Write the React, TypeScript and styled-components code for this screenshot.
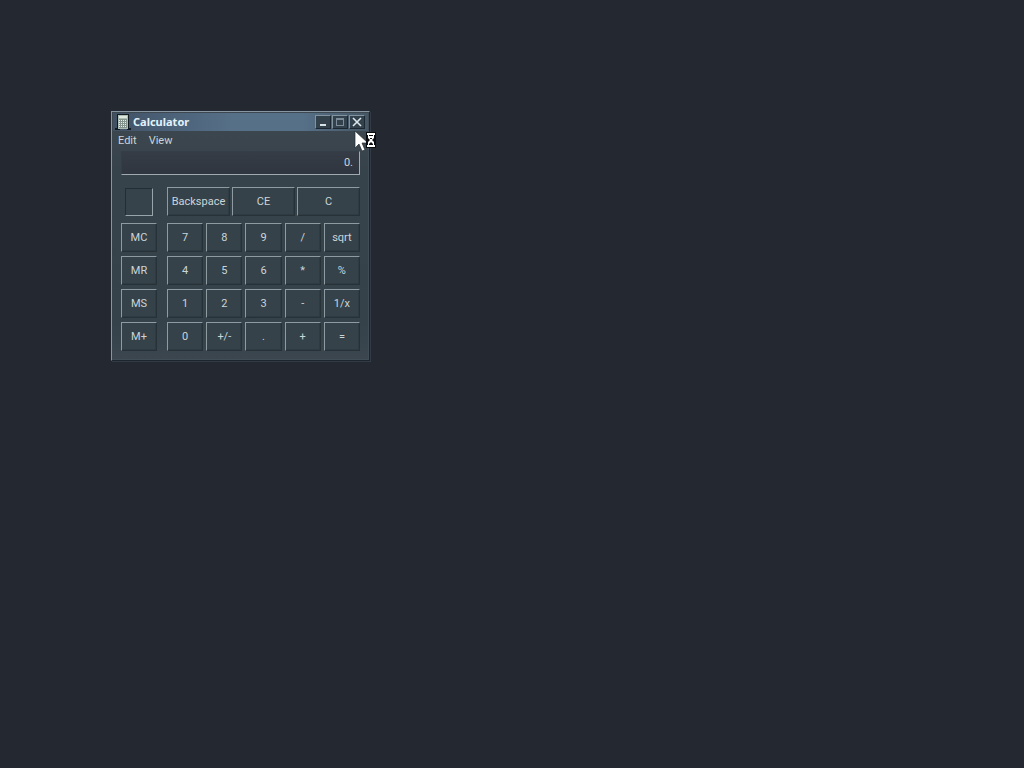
import React, { useState } from "react";
import styled, { createGlobalStyle } from "styled-components";

const GlobalStyle = createGlobalStyle`
  * { box-sizing: border-box; }
  body {
    margin: 0;
    background: #232831;
    color: #cbd5d9;
    font: 11px/14px Roboto, "Liberation Sans", sans-serif;
  }
  button, input { font: inherit; color: inherit; border-radius: 0; margin: 0; }
`;

const Desktop = styled.main`
  position: relative;
  min-height: 100vh;
  overflow: hidden;
  background: #232831;
`;

const Window = styled.section`
  position: absolute;
  left: 111px;
  top: 111px;
  width: 259px;
  padding: 1px;
  border: 1px solid #1d242c;
  border-top-color: #8696a3;
  border-left-color: #8696a3;
  background: linear-gradient(#3d474f 0, #37434b 60px, #35424a 210px, #3b464f 100%);
  box-shadow: inset -1px -1px #414d57, 1px 1px #333c46;
`;

const TitleBar = styled.header`
  display: flex;
  align-items: center;
  gap: 2px;
  height: 18px;
  padding: 0 3px 0 2px;
  background: linear-gradient(90deg, #415062 0, #4a6077 50px, #567088 120px, #567088 190px, #465765 100%);
`;

const Title = styled.h1`
  flex: 1;
  margin: 0;
  color: #e2f3fb;
  font: bold 11px/14px "Noto Sans", sans-serif;
`;

const Captions = styled.div`
  display: flex;
  gap: 1px;
`;

const Caption = styled.button`
  display: flex;
  align-items: center;
  justify-content: center;
  width: 16px;
  height: 14px;
  padding: 0;
  border: 1px solid #1c2731;
  border-top-color: #8293a0;
  border-left-color: #8293a0;
  background: #33414c;
`;

const Menu = styled.nav`
  display: flex;
  gap: 2px;
  height: 20px;
`;

const MenuItem = styled.button`
  padding: 0 5px;
  border: 0;
  background: none;
`;

const Body = styled.div`
  display: flex;
  flex-direction: column;
  padding: 0 8px 8px;
`;

const Display = styled.input`
  width: 100%;
  height: 24px;
  padding: 0 6px 2px;
  border: 1px solid #343e48;
  border-right-color: #a0aaaf;
  border-bottom-color: #a0aaaf;
  background: linear-gradient(#363c46, #30363f);
  text-align: right;
  outline: 0;
`;

const TopRow = styled.div`
  display: grid;
  grid-template-columns: 36px 1fr;
  column-gap: 10px;
  margin: 12px 0 7px;
`;

const Memory = styled.output`
  align-self: end;
  justify-self: center;
  width: 28px;
  height: 28px;
  border: 1px solid #222d34;
  border-right-color: #98a5aa;
  border-bottom-color: #98a5aa;
`;

const ClearKeys = styled.div`
  display: grid;
  grid-template-columns: repeat(3, 1fr);
  column-gap: 2px;
`;

const Pad = styled.div`
  display: grid;
  grid-template-columns: 36px 1fr;
  column-gap: 10px;
`;

const KeyGrid = styled.div<{ $columns: number }>`
  display: grid;
  grid-template-columns: repeat(${(p) => p.$columns}, 1fr);
  gap: 4px 3px;
`;

const Key = styled.button`
  min-width: 0;
  height: 29px;
  padding: 0;
  border: 1px solid #263138;
  border-top-color: #8e9ca2;
  border-left-color: #8e9ca2;
  background: #35424a;
  box-shadow: inset -1px -1px #2f3b42;
  white-space: nowrap;
`;

const Pointer = styled.svg`
  position: absolute;
  left: 354px;
  top: 130px;
`;

const memoryKeys = ["MC", "MR", "MS", "M+"];
const clearKeys = ["Backspace", "CE", "C"];
const keys = [
  "7", "8", "9", "/", "sqrt",
  "4", "5", "6", "*", "%",
  "1", "2", "3", "-", "1/x",
  "0", "+/-", ".", "+", "=",
];

function CalculatorIcon() {
  return (
    <svg width="16" height="16" viewBox="0 0 16 16" shapeRendering="crispEdges" aria-hidden="true">
      <path d="M2 0h12v15H2zM0 14h5v2H0zM12 14h4v2h-4z" fill="#101a20" />
      <path d="M3 1h10v14H3z" fill="#aebcb6" />
      <path d="M4 2h8v2H4z" fill="#dce6da" />
      <path d="M4 5h8v9H4z" fill="#84938c" />
      <path d="M4 6h1v1H4zM6 6h1v1H6zM8 6h1v1H8zM10 6h1v1h-1zM4 8h1v1H4zM6 8h1v1H6zM8 8h1v1H8zM10 8h1v1h-1zM4 10h1v1H4zM6 10h1v1H6zM8 10h1v1H8zM10 10h1v1h-1zM4 12h1v1H4zM6 12h1v1H6zM8 12h1v1H8zM10 12h1v1h-1z" fill="#eaf2d8" />
    </svg>
  );
}

export default function App() {
  const [value, setValue] = useState("0.");

  const press = (key: string) => {
    if (/^\d$/.test(key)) setValue((v) => (v === "0." ? key : v + key));
    if (key === "C" || key === "CE") setValue("0.");
    if (key === "Backspace") setValue((v) => v.slice(0, -1) || "0.");
  };

  const renderKey = (key: string) => (
    <Key key={key} type="button" onClick={() => press(key)}>{key}</Key>
  );

  return (
    <>
      <GlobalStyle />
      <Desktop>
        <Window aria-label="Calculator">
          <TitleBar>
            <CalculatorIcon />
            <Title>Calculator</Title>
            <Captions>
              <Caption type="button" aria-label="Minimize">
                <svg width="10" height="10" shapeRendering="crispEdges"><path d="M2 7h6v2H2z" fill="#d6e2e7" /></svg>
              </Caption>
              <Caption type="button" aria-label="Maximize">
                <svg width="10" height="10" shapeRendering="crispEdges"><path d="M1 1h8v8H1zM2 3v5h6V3z" fillRule="evenodd" fill="#7c8c98" /></svg>
              </Caption>
              <Caption type="button" aria-label="Close">
                <svg width="10" height="10"><path d="M1 1l8 8M9 1L1 9" stroke="#dce8ed" strokeWidth="1.6" /></svg>
              </Caption>
            </Captions>
          </TitleBar>
          <Menu aria-label="Calculator menu">
            <MenuItem type="button">Edit</MenuItem>
            <MenuItem type="button">View</MenuItem>
          </Menu>
          <Body>
            <Display aria-label="Result" value={value} readOnly />
            <TopRow>
              <Memory aria-label="Memory" />
              <ClearKeys>{clearKeys.map(renderKey)}</ClearKeys>
            </TopRow>
            <Pad>
              <KeyGrid $columns={1}>{memoryKeys.map(renderKey)}</KeyGrid>
              <KeyGrid $columns={5}>{keys.map(renderKey)}</KeyGrid>
            </Pad>
          </Body>
        </Window>
        <Pointer width="23" height="23" viewBox="0 0 23 23" aria-hidden="true">
          <path d="M1 1v17l4-4 3 7 3-1-3-7h6z" fill="#fff" stroke="#252c33" strokeWidth=".7" />
          <path d="M12 2h10v16H12z" fill="#080c10" />
          <path d="M13 3h8v2h-1v3l-2 2 2 2v3h1v2h-8v-2h1v-3l2-2-2-2V5h-1z" fill="#fff" />
          <path d="M15 5h4v1h-4zM16 8h2v1h-2zM15 14l2-2 2 2v1h-4z" fill="#080c10" />
        </Pointer>
      </Desktop>
    </>
  );
}
